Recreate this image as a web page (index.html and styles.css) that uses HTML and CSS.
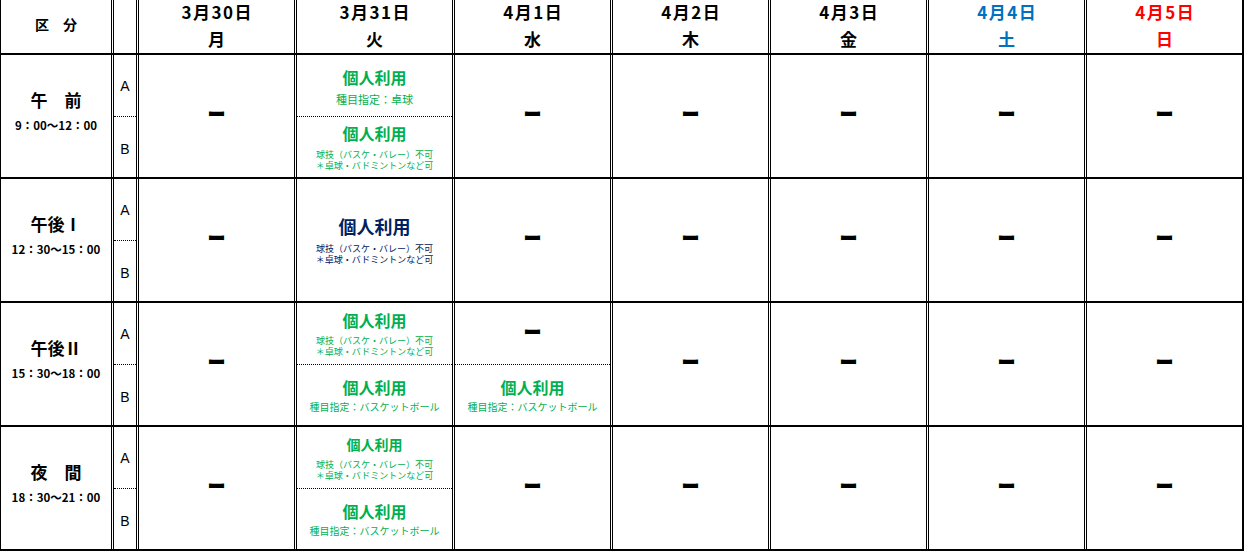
FILE: index.html
```html
<!DOCTYPE html>
<html lang="ja">
<head>
<meta charset="utf-8">
<title>利用予定表</title>
<link rel="stylesheet" href="styles.css">
</head>
<body>
<div class="sheet">
  <div class="row head">
    <div class="c lab"><span class="kubun">区　分</span></div>
    <div class="c ab"></div>
    <div class="c day"><div class="date">3月30日</div><div class="wd">月</div></div>
    <div class="c day"><div class="date">3月31日</div><div class="wd">火</div></div>
    <div class="c day"><div class="date">4月1日</div><div class="wd">水</div></div>
    <div class="c day"><div class="date">4月2日</div><div class="wd">木</div></div>
    <div class="c day"><div class="date">4月3日</div><div class="wd">金</div></div>
    <div class="c day sat"><div class="date">4月4日</div><div class="wd">土</div></div>
    <div class="c day sun last"><div class="date">4月5日</div><div class="wd">日</div></div>
  </div>

  <div class="row grp">
    <div class="c lab slotcell"><div class="slot">午　前</div><div class="time">9：00～12：00</div></div>
    <div class="c ab"><div class="sub a"><span class="abl">A</span></div><div class="sub b"><span class="abl lower">B</span></div></div>
    <div class="c day none"><span class="dash">ー</span></div>
    <div class="c day split">
      <div class="sub a green"><div class="t">個人利用</div><div class="s11">種目指定：卓球</div></div>
      <div class="sub b green"><div class="t">個人利用</div><div class="s9">球技（バスケ・バレー）不可</div><div class="s9">＊卓球・バドミントンなど可</div></div>
    </div>
    <div class="c day none"><span class="dash">ー</span></div>
    <div class="c day none"><span class="dash">ー</span></div>
    <div class="c day none"><span class="dash">ー</span></div>
    <div class="c day none"><span class="dash">ー</span></div>
    <div class="c day none last"><span class="dash">ー</span></div>
  </div>

  <div class="row grp">
    <div class="c lab slotcell"><div class="slot">午後Ⅰ</div><div class="time">12：30～15：00</div></div>
    <div class="c ab"><div class="sub a"><span class="abl">A</span></div><div class="sub b"><span class="abl lower">B</span></div></div>
    <div class="c day none"><span class="dash">ー</span></div>
    <div class="c day navy"><div class="t18">個人利用</div><div class="s9">球技（バスケ・バレー）不可</div><div class="s9">＊卓球・バドミントンなど可</div></div>
    <div class="c day none"><span class="dash">ー</span></div>
    <div class="c day none"><span class="dash">ー</span></div>
    <div class="c day none"><span class="dash">ー</span></div>
    <div class="c day none"><span class="dash">ー</span></div>
    <div class="c day none last"><span class="dash">ー</span></div>
  </div>

  <div class="row grp">
    <div class="c lab slotcell"><div class="slot">午後Ⅱ</div><div class="time">15：30～18：00</div></div>
    <div class="c ab"><div class="sub a"><span class="abl">A</span></div><div class="sub b"><span class="abl lower">B</span></div></div>
    <div class="c day none"><span class="dash">ー</span></div>
    <div class="c day split">
      <div class="sub a green"><div class="t">個人利用</div><div class="s9">球技（バスケ・バレー）不可</div><div class="s9">＊卓球・バドミントンなど可</div></div>
      <div class="sub b green"><div class="t tight">個人利用</div><div class="s10">種目指定：バスケットボール</div></div>
    </div>
    <div class="c day split">
      <div class="sub a subdash"><span class="dash">ー</span></div>
      <div class="sub b green"><div class="t tight">個人利用</div><div class="s10">種目指定：バスケットボール</div></div>
    </div>
    <div class="c day none"><span class="dash">ー</span></div>
    <div class="c day none"><span class="dash">ー</span></div>
    <div class="c day none"><span class="dash">ー</span></div>
    <div class="c day none last"><span class="dash">ー</span></div>
  </div>

  <div class="row grp">
    <div class="c lab slotcell"><div class="slot">夜　間</div><div class="time">18：30～21：00</div></div>
    <div class="c ab"><div class="sub a"><span class="abl">A</span></div><div class="sub b"><span class="abl lower">B</span></div></div>
    <div class="c day none"><span class="dash">ー</span></div>
    <div class="c day split">
      <div class="sub a green"><div class="t14">個人利用</div><div class="s9">球技（バスケ・バレー）不可</div><div class="s9">＊卓球・バドミントンなど可</div></div>
      <div class="sub b green"><div class="t tight">個人利用</div><div class="s10">種目指定：バスケットボール</div></div>
    </div>
    <div class="c day none"><span class="dash">ー</span></div>
    <div class="c day none"><span class="dash">ー</span></div>
    <div class="c day none"><span class="dash">ー</span></div>
    <div class="c day none"><span class="dash">ー</span></div>
    <div class="c day none last"><span class="dash">ー</span></div>
  </div>
</div>
</body>
</html>
```

FILE: styles.css
```css
html, body {
  margin: 0;
  padding: 0;
  background: #fff;
}
body {
  font-family: "Noto Sans CJK JP", "Noto Sans", sans-serif;
  color: #000;
  width: 1244px;
  height: 552px;
  overflow: hidden;
}
.sheet {
  width: 1244px;
}
.row {
  display: flex;
  column-gap: 1px;
  border-bottom: 2px solid #000;
}
.head {
  height: 53px;
}
.grp {
  height: 122px;
}
.c {
  box-sizing: border-box;
  border-left: 1px solid #000;
  border-right: 1px solid #000;
  display: flex;
  flex-direction: column;
  align-items: center;
  justify-content: center;
  flex: none;
}
.lab { width: 112px; }
.ab { width: 24px; justify-content: flex-start; }
.day { width: 157px; }
.day.last { width: 158px; border-right-width: 2px; }

/* header */
.head .day { justify-content: flex-start; }
.kubun {
  font-size: 14px;
  font-weight: 700;
  line-height: 20px;
  margin-bottom: 5px;
}
.date, .wd {
  font-size: 17px;
  font-weight: 700;
  text-align: center;
}
.date { line-height: 24px; letter-spacing: 1.5px; text-indent: 1.5px; }
.wd { line-height: 29px; }
.sat { color: #0070c0; }
.sun { color: #ff0000; }

/* left label column */
.slotcell { padding-bottom: 12px; }
.slot {
  font-size: 17px;
  font-weight: 700;
  line-height: 24px;
}
.time {
  font-size: 11.5px;
  font-weight: 700;
  line-height: 14px;
  margin-top: 6px;
  white-space: nowrap;
}

/* split sub cells */
.split { justify-content: flex-start; }
.sub {
  box-sizing: border-box;
  width: 100%;
  height: 61px;
  display: flex;
  flex-direction: column;
  align-items: center;
  justify-content: center;
  flex: none;
}
.sub.b { border-top: 1px dotted #000; }
.abl {
  font-family: "Liberation Sans", Arial, sans-serif;
  font-size: 14px;
  line-height: 16px;
}
.abl.lower { margin-top: 4px; }

/* dash */
.dash {
  font-size: 16px;
  font-weight: 700;
  line-height: 20px;
  -webkit-text-stroke: 2px #000;
}
.none { padding-bottom: 6px; }
.subdash { padding-bottom: 5px; }

/* content */
.green { color: #00b050; }
.navy { color: #002060; }
.t {
  font-size: 16px;
  font-weight: 700;
  line-height: 20px;
  margin-bottom: 5.5px;
}
.t.tight { margin-bottom: 4px; }
.t14 {
  font-size: 14px;
  font-weight: 700;
  line-height: 18px;
  margin-bottom: 6px;
}
.t18 {
  font-size: 18px;
  font-weight: 700;
  line-height: 22px;
  margin-bottom: 6.5px;
}
.s9, .s10, .s11 {
  white-space: nowrap;
  font-weight: 400;
}
.s9 { font-size: 9px; line-height: 11px; }
.s10 { font-size: 10px; line-height: 12px; }
.s11 { font-size: 11px; line-height: 12px; }
.split .sub.a .s11 { margin-top: 0.5px; }
```
